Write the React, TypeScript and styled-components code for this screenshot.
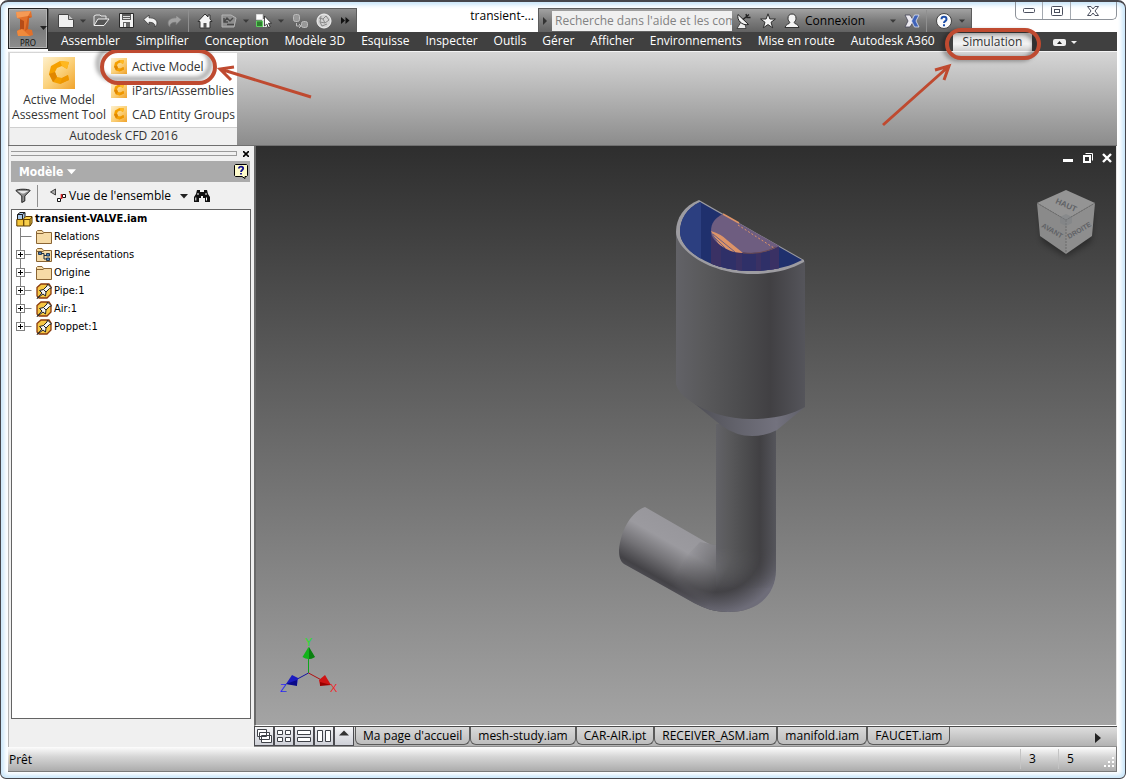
import React from "react";
import styled, { createGlobalStyle, css } from "styled-components";

const ui = `"Open Sans", "Noto Sans", sans-serif`;
const tahoma = `"DejaVu Sans Condensed", "DejaVu Sans", "Noto Sans", sans-serif`;
const markRed = "#bf4a30";

const GlobalStyle = createGlobalStyle`
  * { box-sizing: border-box; }
  body { margin: 0; background: #fff; font: 12px/15px ${ui}; color: #000; }
  button, input { font: inherit; color: inherit; border: 0; padding: 0; margin: 0; background: none; border-radius: 0; }
  ul { list-style: none; margin: 0; padding: 0; }
  svg { display: block; flex: none; }
`;

const Window = styled.div`
  display: flex;
  flex-direction: column;
  min-height: 100vh;
  padding: 0 8px 6px 7px;
  border: 1px solid #46464c;
  border-top-width: 2px;
  border-radius: 8px 8px 6px 6px;
  background: #fff;
  box-shadow: inset 0 0 4px 3px #c9e6fa;
`;

/* ---------- header ---------- */
const Header = styled.header`
  display: grid;
  grid-template-columns: 40px minmax(0, 1fr);
  grid-template-rows: 30px 19px;
`;

const AppButton = styled.button`
  grid-row: 1 / span 2;
  margin-top: 6px;
  height: 41px;
  border: 1px solid #222;
  background: linear-gradient(#a4a4a4, #7c7c7c 55%, #8d8d8d);
  box-shadow: inset 0 0 0 1px #b4b4b4;
  position: relative;
  z-index: 1;
`;

const TitleRow = styled.div`
  display: flex;
  align-items: flex-end;
`;

const barBackground = css`
  height: 24px;
  display: flex;
  flex: none;
  align-items: center;
  border: 1px solid #5c5c5c;
  border-bottom: 0;
  background: linear-gradient(#8e8e8e, #6c6c6c 50%, #5a5a5a);
`;

const QuickBar = styled.div`
  ${barBackground}
  padding-left: 5px;
  width: 309px;
`;

const InfoBar = styled.div`
  ${barBackground}
  width: 434px;
  background: linear-gradient(#a2a2a2, #7c7c7c 50%, #626262);
`;

const Tool = styled.button<{ $w: number }>`
  width: ${(p) => p.$w}px;
  height: 22px;
  display: flex;
  flex: none;
  align-items: center;
  justify-content: center;
`;

const Separator = styled.span`
  width: 1px;
  height: 22px;
  margin: 0 3px 0 2px;
  background: #8f8f8f;
`;

const DocTitle = styled.div`
  flex: 1;
  text-align: right;
  padding: 0 4px 4px 0;
  align-self: center;
  white-space: nowrap;
`;

const Search = styled.input`
  width: 180px;
  height: 20px;
  padding: 0 0 0 3px;
  background: #f0f0f0;
  &::placeholder { color: #828282; opacity: 1; }
`;

const Account = styled.button`
  display: flex;
  align-items: center;
  justify-content: space-between;
  width: 96px;
  padding: 0 4px 0 1px;
`;

const WindowControls = styled.div`
  display: flex;
  flex: none;
  align-self: flex-start;
  width: 102px;
  height: 18px;
  margin-left: 43px;
  border: 1px solid #8d9299;
  border-top: 0;
  border-radius: 0 0 5px 5px;
`;

const Control = styled.button<{ $wide?: boolean }>`
  flex: ${(p) => (p.$wide ? 46 : 27)};
  display: flex;
  align-items: center;
  justify-content: center;
  & + & { border-left: 1px solid #a4a9b0; }
`;

const TabBar = styled.nav`
  display: flex;
  align-items: stretch;
  padding-left: 5px;
  background: #404040;
  color: #fff;
`;

const TabHolder = styled.div`
  position: relative;
  display: flex;
`;

const Tab = styled.button<{ $active?: boolean }>`
  padding: 0 8px 2px;
  white-space: nowrap;
  ${(p) =>
    p.$active &&
    css`
      margin: 1px 0 0 10px;
      padding: 0 10px 2px;
      color: #333;
      background: linear-gradient(#d9d9d9, #f4f4f4 60%, #cfcfcf);
      border-radius: 2px 2px 0 0;
    `}
`;

/* ---------- ribbon ---------- */
const Ribbon = styled.section`
  height: 95px;
  display: flex;
  padding: 1px 0 0 1px;
  border-top: 1px solid #f4f4f4;
  background: linear-gradient(#d6d6d6, #8c8c8c);
  border-bottom: 1px solid #6f6f6f;
`;

const RibbonPanel = styled.div`
  width: 228px;
  display: flex;
  flex-direction: column;
  background: #fff;
  border-left: 1px solid #cfcfcf;
`;

const RibbonTools = styled.div`
  flex: 1;
  display: flex;
  color: #333;
`;

const BigTool = styled.button`
  width: 98px;
  display: flex;
  flex-direction: column;
  align-items: center;
  gap: 3px;
  padding-top: 4px;
  white-space: nowrap;
`;

const SmallTools = styled.ul`
  padding-top: 1px;
`;

const SmallToolItem = styled.li`
  position: relative;
  height: 24px;
`;

const SmallTool = styled.button`
  display: flex;
  align-items: center;
  gap: 5px;
  height: 24px;
  padding-left: 3px;
  white-space: nowrap;
`;

const RibbonTitle = styled.div`
  height: 18px;
  line-height: 16px;
  text-align: center;
  color: #333;
  background: #f0f0f0;
  border-top: 1px solid #cfcfcf;
`;

const Mark = styled.svg<{ $x: number; $y: number }>`
  position: absolute;
  left: ${(p) => p.$x}px;
  top: ${(p) => p.$y}px;
  z-index: 3;
  pointer-events: none;
`;

/* ---------- body ---------- */
const Body = styled.main`
  flex: 1;
  display: flex;
`;

const SidePanel = styled.aside`
  width: 246px;
  display: flex;
  flex-direction: column;
  padding: 0 3px 28px 2px;
  border-left: 1px solid #b4b4b4;
  background: #f0f0f0;
`;

const GripRow = styled.div`
  height: 15px;
  display: flex;
  align-items: center;
  gap: 4px;
`;

const Grip = styled.div`
  flex: 1;
  height: 5px;
  border: solid #9a9a9a;
  border-width: 1px 1px 1px 0;
`;

const PanelHeader = styled.div`
  height: 21px;
  display: flex;
  align-items: center;
  justify-content: space-between;
  padding: 0 2px 0 8px;
  margin-right: 1px;
  background: #ababab;
  color: #fff;
  font: bold 12px/16px ${tahoma};
`;

const PanelMenu = styled.button`
  display: flex;
  align-items: center;
  gap: 4px;
`;

const PanelTools = styled.div`
  height: 27px;
  display: flex;
  align-items: center;
`;

const ViewMenu = styled.button`
  display: flex;
  align-items: center;
  width: 138px;
  gap: 3px;
  margin: 0 5px 0 9px;
  white-space: nowrap;
`;

const Push = styled.span`
  flex: 1;
`;

const Tree = styled.ul`
  flex: 1;
  border: 1px solid #646464;
  background: #fff;
  font: 11px/18px ${tahoma};
`;

const TreeRow = styled.li<{ $root?: boolean }>`
  display: flex;
  align-items: center;
  height: 18px;
  gap: 2px;
  padding-left: 4px;
  font-weight: ${(p) => (p.$root ? "bold" : "normal")};
`;

const Stage = styled.section`
  flex: 1;
  min-width: 0;
  display: flex;
  flex-direction: column;
`;

const Viewport = styled.div`
  flex: 1;
  position: relative;
  border-left: 2px solid #6a6a6a;
  border-right: 1px solid #e6e6e6;
  border-bottom: 1px solid #fff;
  background: linear-gradient(#2e2e2e, #a4a4a4);
`;

const Model = styled.svg`
  position: absolute;
  left: calc(50% - 70px);
  top: 50px;
`;

const Triad = styled.svg`
  position: absolute;
  left: 20px;
  bottom: 30px;
`;

const Cube = styled.svg`
  position: absolute;
  right: 14px;
  top: 38px;
`;

const ChildControls = styled.div`
  position: absolute;
  right: 0;
  top: 1px;
  display: flex;
`;

const DocTabs = styled.div`
  height: 21px;
  display: flex;
  align-items: flex-start;
  border-top: 1px solid #4a4a4a;
  border-bottom: 1px solid #8f8f8f;
  background: linear-gradient(#dedede, #b2b2b2);
`;

const Arrange = styled.button`
  width: 20px;
  height: 19px;
  display: flex;
  align-items: center;
  justify-content: center;
  border: 1px solid #4b4b50;
  border-top: 0;
  background: linear-gradient(#f4f4f6, #cfd1d8);
`;

const DocList = styled.div`
  flex: 1;
  display: flex;
  padding-left: 1px;
`;

const DocTab = styled.button`
  height: 18px;
  padding: 0 7px;
  white-space: nowrap;
  border: 1px solid #5a5a5a;
  border-top: 0;
  border-radius: 0 0 6px 6px;
  background: linear-gradient(#d9d9d9, #bdbdbd);
`;

const StatusBar = styled.footer`
  height: 25px;
  display: flex;
  align-items: center;
  padding-left: 1px;
  background: linear-gradient(#fdfdfd, #d6d6d6 40%, #acacac);
  border-bottom: 1px solid #7a7a7a;
  border-right: 1px solid #7a7a7a;
`;

const StatusCell = styled.span`
  width: 38px;
  height: 20px;
  line-height: 20px;
  padding-left: 8px;
  border-left: 1px solid #c4c4c4;
`;

/* ---------- icons ---------- */
const Caret = ({ color = "#3a3a3a", s = 6 }: { color?: string; s?: number }) => (
  <svg width={s} height={s} viewBox="0 0 6 6"><path d="M0 1.5h6L3 4.8z" fill={color} /></svg>
);

const CfdIcon = ({ size }: { size: number }) => (
  <svg width={size} height={size} viewBox="0 0 32 32">
    <defs>
      <linearGradient id={`cfd${size}`} x1="0" y1="0" x2="1" y2="1">
        <stop offset="0" stopColor="#fef0cd" /><stop offset=".5" stopColor="#fbd27c" /><stop offset="1" stopColor="#f0a32c" />
      </linearGradient>
    </defs>
    <rect width="32" height="32" fill={`url(#cfd${size})`} />
    <path d="M26 5l-9-1-9 5-2 8 4 8 7 2 9-4-1-5-6 3-5-1-2-5 2-4 5-2 5 3z" fill="#f5a000" />
    <path d="M26 5l-9-1 2 5 5 3z" fill="#ffb820" /><path d="M6 17l6-2 2 5-4 5z" fill="#e08600" /><path d="M17 27l2-6 6-3 1 5z" fill="#ee9600" />
  </svg>
);

const InventorIcon = () => (
  <svg width="38" height="39" viewBox="0 0 38 39">
    <path d="M7 3l15-1 1 6-3 1-1 11 4 1 1 5-3 1H9l-1-5 3-2V10L8 9z" fill="#e2702a" />
    <path d="M7 3l15-1-3 5-11 2z" fill="#f59a55" /><path d="M11 10l4 2v8l-4 1z" fill="#b64c17" />
    <path d="M8 22l5-2 8 7H9z" fill="#f08a3c" /><path d="M19 7l4 1-3 1-1 11-3 2z" fill="#c85a1d" />
    <path d="M31 17h7l-3.5 4z" fill="#222" />
    <text x="11" y="37" fontSize="8" fontFamily="Noto Sans" fill="#111">PRO</text>
  </svg>
);

const NewIcon = () => (
  <svg width="16" height="14" viewBox="0 0 16 14"><path d="M.5.5h10l5 5v8H.5z" fill="#f0f0f0" stroke="#444" /><path d="M10.500.5v5h5" fill="#c4c4c4" stroke="#555" /></svg>
);
const OpenIcon = () => (
  <svg width="17" height="13" viewBox="0 0 17 13"><path d="M1 11V2l2-1h4l1 1h5v3" fill="#777" stroke="#e8e8e8" /><path d="M1 11.500L5 5h11l-5 6.500z" fill="#555" stroke="#eee" /></svg>
);
const SaveIcon = () => (
  <svg width="15" height="15" viewBox="0 0 15 15"><path d="M.5.500h14v14H.500z" fill="#f2f2f2" stroke="#2a2a2a" /><rect x="3" y="1" width="9" height="6" fill="#5a5a5a" /><path d="M4 3.500h7M4 5.500h7" stroke="#ddd" /><rect x="4" y="9" width="7" height="5" fill="#666" /><rect x="5" y="10" width="2" height="4" fill="#eee" /></svg>
);
const UndoIcon = ({ dim }: { dim?: boolean }) => (
  <svg width="15" height="14" viewBox="0 0 15 14">
    <path transform={dim ? "matrix(-1 0 0 1 15 0)" : undefined} d="M.7 5.500L6 1v2.800c5 0 8 2 8 5.200 0 2-1 3-2 4 .4-3-1.500-4.600-6-4.700v2.500z" fill={dim ? "#a2a2a2" : "#f2f2f2"} stroke={dim ? "#777" : "#3a3a3a"} strokeWidth=".8" />
  </svg>
);
const HomeIcon = () => (
  <svg width="16" height="16" viewBox="0 0 16 16"><path d="M1 8.500L8 1l3 3V2h2v4l2 2.500h-2V15H3V8.500z" fill="#f4f4f4" stroke="#333" /><path d="M6.500 15v-5h3v5" fill="#555" /></svg>
);
const SwapIcon = () => (
  <svg width="16" height="14" viewBox="0 0 16 14" fill="none" stroke="#b4b4b4"><path d="M1 1h9l5 3-2 9H1z" fill="#8e8e8e" /><path d="M3 8l3-4 3 3 3-3M3 4v4h4M13 10.500H6" stroke="#484848" strokeWidth="1.400" /></svg>
);
const SelectIcon = () => (
  <svg width="17" height="16" viewBox="0 0 17 16"><path d="M1.500 1.500h6v5h-6z" fill="#fff" stroke="#ddd" /><path d="M7.500 6.500h4v7h-4z" fill="#dcdcdc" stroke="#eee" /><path d="M1.500 8h6v5.500h-6z" fill="#2f7f2f" stroke="#5fd05f" /><path d="M9.500 3v10l2.300-2 1.700 3.600 1.700-.8-1.700-3.500h3z" fill="#fff" stroke="#222" strokeWidth=".8" /></svg>
);
const LinkIcon = () => (
  <svg width="16" height="16" viewBox="0 0 16 16" fill="#989898" stroke="#bcbcbc"><rect x="1.500" y="1.500" width="6" height="7" rx="2" /><rect x="9.500" y="8.500" width="6" height="6" rx="2" /><path d="M4.500 10v3h4M7 11l2 2-2 2" fill="none" /></svg>
);
const SphereIcon = () => (
  <svg width="16" height="16" viewBox="0 0 16 16"><circle cx="8" cy="8" r="7" fill="#d2d2d2" stroke="#f5f5f5" /><path d="M3 5l4 1 3-3 3 4-4 3-5-1 2 4 5-2M7 6l2 4M5 3l-1 6" stroke="#888" fill="none" /></svg>
);
const MoreIcon = () => (
  <svg width="9" height="7" viewBox="0 0 9 7"><path d="M0 0l4 3.500L0 7zM4.500 0l4 3.500-4 3.500z" fill="#111" /></svg>
);
const DishIcon = () => (
  <svg width="16" height="16" viewBox="0 0 16 16"><path d="M5 9l-4 6.500h9L9 11z" fill="#eee" stroke="#333" strokeWidth=".8" /><path d="M2 1.500C.5 7 6 13 12.500 11.500z" fill="#f4f4f4" stroke="#222" /><path d="M7 6.500l6-5M10 1l1 3.500h3.500" stroke="#222" fill="none" strokeWidth="1.400" /></svg>
);
const StarIcon = () => (
  <svg width="16" height="16" viewBox="0 0 16 16"><path d="M8 .8l1.900 5.200h5.500l-4.400 3.300 1.700 5.500L8 11.600l-4.700 3.200L5 9.300.6 6h5.500z" fill="#f4f4f4" stroke="#2c2c2c" /></svg>
);
const UserIcon = () => (
  <svg width="16" height="16" viewBox="0 0 16 16"><path d="M8 1c2.500 0 4 1.600 4 4.200 0 2-1 3.600-2 4.300.3 1.500 4.500 1.500 5 5H1c.5-3.500 4.700-3.500 5-5-1-.7-2-2.300-2-4.300C4 2.600 5.500 1 8 1z" fill="#f4f4f4" stroke="#333" /></svg>
);
const ExchangeIcon = () => (
  <svg width="16" height="14" viewBox="0 0 16 14"><path d="M1 1h5L8.500 5v4L6 13H1l3-6z" fill="#eceaf0" stroke="#445" strokeWidth=".8" /><path d="M15 1h-4.500L7.500 7l3 6H15l-3-6z" fill="#3f62b8" stroke="#dfe5f5" strokeWidth=".8" /></svg>
);
const HelpIcon = () => (
  <svg width="16" height="16" viewBox="0 0 16 16"><circle cx="8" cy="8" r="7.500" fill="#fafafa" stroke="#444" /><path d="M5.500 6.200c0-3.200 5-3.200 5 0 0 2-2.500 1.800-2.500 3.800M8 11.200v2" stroke="#1f4fa8" strokeWidth="2" fill="none" /></svg>
);
const FilterIcon = () => (
  <svg width="16" height="15" viewBox="0 0 16 15"><path d="M.8 2.500C3 .8 13 .8 15.200 2.500L9.800 8v5l-3 1.500V8z" fill="#8c8c8c" stroke="#222" /><path d="M2.500 3h11L9 5.500H7z" fill="#e6e6e6" /></svg>
);
const AssemblyViewIcon = () => (
  <svg width="16" height="16" viewBox="0 0 16 16"><path d="M.5 4l5-3v6z" fill="#aaa" stroke="#222" strokeWidth=".8" /><path d="M7.500 10.500h3v3h-3zM12.500 6.500h3v3h-3z" fill="#fff" stroke="#111" /><path d="M11.500 6v5" stroke="#d22" strokeWidth="1.600" /></svg>
);
const BinocularsIcon = () => (
  <svg width="16" height="14" viewBox="0 0 16 14"><path d="M3 1h3v2h4V1h3l1 4 2 3v5h-5V9H9V7H7v2H5v4H0V8l2-3z" fill="#111" /><path d="M4 4v2M1.800 8.500v3M12 4v2M12.500 8.500v3" stroke="#fff" /></svg>
);
const NoteHelpIcon = () => (
  <svg width="14" height="15" viewBox="0 0 14 15"><path d="M1.500.5h11l1 1v10l-1 1H11v2l-3-2H1.500l-1-1v-10z" fill="#fffccc" stroke="#000" /><path d="M4.800 4.500c0-2.500 4.400-2.500 4.400 0C9.200 6 7 6 7 8M7 9v1.600" stroke="#11118c" strokeWidth="1.800" fill="none" /></svg>
);
const RootIcon = () => (
  <svg width="17" height="17" viewBox="0 0 17 17"><path d="M1.500 3.500l2.500-2h5v7h-7.500z" fill="#a9c8ea" stroke="#1a1a1a" /><path d="M1.500 3.500h5v5M6.500 3.500l2.500-2" stroke="#1a1a1a" fill="none" /><path d="M.8 8.500h7v6.500h-7z" fill="#f5c63a" stroke="#5b3a00" /><path d="M7.800 7.500l2-2h6.200v6.500l-2 3h-6.200z" fill="#f8cf4c" stroke="#5b3a00" /><path d="M8 8.500h6v6M14 8.500l2-2.500" stroke="#5b3a00" fill="none" /></svg>
);
const FolderIcon = ({ rep }: { rep?: boolean }) => (
  <svg width="16" height="16" viewBox="0 0 16 16">
    <path d="M.5 14.500v-12l1-1H6l1.500 2h8v11z" fill="#f6dba6" stroke="#8a6534" /><path d="M.5 4.500h7" stroke="#8a6534" />
    {rep && (<><path d="M4 6.500h4v5.500h3M8 8.500h3" stroke="#1d2f45" fill="none" /><path d="M2.500 5h3v2.500h-3zM10.500 6.500h3v2.500h-3zM10.500 11h3v2.500h-3z" fill="#4f86c0" stroke="#1d2f45" strokeWidth=".9" /></>)}
  </svg>
);
const PartIcon = () => (
  <svg width="16" height="16" viewBox="0 0 16 16"><path d="M1 4.500l4-3.500h8l2 3v7l-4 4H3l-2-2z" fill="#f6c744" stroke="#8b3a0e" strokeWidth="1.300" /><path d="M1 15.500l5-5.500-2.500-2.500 4-1L11 3l.5-2L15.500 5l-2 .5L10 9l-.5 4L7 11z" fill="#f4f4f4" stroke="#222" /><path d="M7.500 6.500L10 9" stroke="#222" /></svg>
);
const Connector = ({ kind }: { kind: "leaf" | "node" | "last" }) => (
  <svg width="18" height="18" viewBox="0 0 18 18">
    <path d={`M4.500 0v${kind === "last" ? 9 : 18}M4.500 8.500h11`} stroke="#808080" fill="none" />
    {kind !== "leaf" && (<><rect x=".5" y="4.500" width="8" height="8" fill="#fff" stroke="#808080" /><path d="M2 8.500h5M4.500 6v5" stroke="#000" /></>)}
  </svg>
);

const arrangeShapes = [
  "M1.500 1.500h9v7h-9zM3.500 4.500h10v7h-10zM5.500 7.500h10v7h-10z",
  "M1.500 2.500h5v4h-5zM9.500 2.500h5v4h-5zM1.500 9.500h5v4h-5zM9.500 9.500h5v4h-5z",
  "M1.500 2.500h13v4h-13zM1.500 9.500h13v4h-13z",
  "M1.500 2.500h5v11h-5zM9.500 2.500h5v11h-5z",
];

const SimulationMark = () => (
  <Mark $x={-62} $y={-6} width="170" height="108" viewBox="880 26 170 108" fill="none">
    <defs><filter id="soft2" x="-20%" y="-40%" width="140%" height="180%"><feGaussianBlur stdDeviation="2" /></filter></defs>
    <rect x="943" y="32" width="91" height="27" rx="14" stroke="#000" strokeOpacity=".4" strokeWidth="4" filter="url(#soft2)" />
    <rect x="946" y="30" width="92" height="28" rx="14" stroke={markRed} strokeWidth="4" />
    <path d="M882 125L947 67M934 70l14-4-5 14" stroke={markRed} strokeWidth="3" />
  </Mark>
);

const ActiveModelMark = () => (
  <Mark $x={-18} $y={-4} width="224" height="56" viewBox="90 50 224 56" fill="none">
    <defs><filter id="soft1" x="-20%" y="-40%" width="140%" height="180%"><feGaussianBlur stdDeviation="2" /></filter></defs>
    <rect x="98" y="48" width="112" height="31" rx="15" stroke="#000" strokeOpacity=".4" strokeWidth="4" filter="url(#soft1)" />
    <rect x="102" y="51" width="113" height="32" rx="16" stroke={markRed} strokeWidth="4" />
    <path d="M311 97L220 69M231 80l-11-11 14-2" stroke={markRed} strokeWidth="3" />
  </Mark>
);

const tabs = ["Assembler", "Simplifier", "Conception", "Modèle 3D", "Esquisse", "Inspecter", "Outils", "Gérer", "Afficher", "Environnements", "Mise en route", "Autodesk A360"];
const docs = ["Ma page d'accueil", "mesh-study.iam", "CAR-AIR.ipt", "RECEIVER_ASM.iam", "manifold.iam", "FAUCET.iam"];
const smallTools = ["Active Model", "iParts/iAssemblies", "CAD Entity Groups"];
const nodes: { label: string; kind: "leaf" | "node" | "last"; icon: React.ReactNode }[] = [
  { label: "Relations", kind: "leaf", icon: <FolderIcon /> },
  { label: "Représentations", kind: "node", icon: <FolderIcon rep /> },
  { label: "Origine", kind: "node", icon: <FolderIcon /> },
  { label: "Pipe:1", kind: "node", icon: <PartIcon /> },
  { label: "Air:1", kind: "node", icon: <PartIcon /> },
  { label: "Poppet:1", kind: "last", icon: <PartIcon /> },
];

const ValveModel = () => (
  <Model width="192" height="420" viewBox="616 196 192 420" role="img" aria-label="Valve">
    <defs>
      <linearGradient id="body"><stop offset="0" stopColor="#626267" /><stop offset=".2" stopColor="#5a5a5c" /><stop offset=".5" stopColor="#4c4c4e" /><stop offset=".73" stopColor="#414043" /><stop offset="1" stopColor="#55555b" /></linearGradient>
      <linearGradient id="cone"><stop offset="0" stopColor="#4d4d53" /><stop offset=".4" stopColor="#62626b" /><stop offset=".75" stopColor="#73727e" /><stop offset="1" stopColor="#5f5f68" /></linearGradient>
      <linearGradient id="side" gradientUnits="userSpaceOnUse" x1="676" y1="525" x2="646" y2="578"><stop offset="0" stopColor="#98979c" /><stop offset=".3" stopColor="#9b9a9f" /><stop offset=".6" stopColor="#737276" /><stop offset=".9" stopColor="#434246" /><stop offset="1" stopColor="#4e4d53" /></linearGradient>
      <radialGradient id="bend" gradientUnits="userSpaceOnUse" cx="716" cy="546" r="68"><stop offset="0" stopColor="#68676b" /><stop offset=".35" stopColor="#5a5a5d" /><stop offset=".68" stopColor="#434246" /><stop offset="1" stopColor="#6e6d79" /></radialGradient>
      <linearGradient id="bendFade" gradientUnits="userSpaceOnUse" x1="684" y1="560" x2="722" y2="580"><stop offset="0" stopColor="#000" /><stop offset="1" stopColor="#fff" /></linearGradient>
      <linearGradient id="pipeFade" gradientUnits="userSpaceOnUse" x1="0" y1="548" x2="0" y2="590"><stop offset="0" stopColor="#fff" /><stop offset="1" stopColor="#000" /></linearGradient>
      <mask id="bendMask"><rect x="616" y="400" width="192" height="220" fill="url(#bendFade)" /></mask>
      <mask id="pipeMask"><rect x="616" y="400" width="192" height="220" fill="url(#pipeFade)" /></mask>
      <clipPath id="cup"><path d="M700 202C687 208 680 219 680 232c0 18 30 39 72 39 20 0 37-4 50-11z" /></clipPath>
    </defs>
    <path d="M645 507L704 541q6 4 12 4h60v25c0 25-18 42-48 42-14 0-24-4-34-9L624 564c-4-3-5-8-5-14 2-20 12-38 26-43z" fill="url(#side)" />
    <path d="M716 545h60v25c0 25-18 42-48 42-14 0-24-4-34-9L660 584 700 542z" fill="url(#bend)" mask="url(#bendMask)" />
    <path d="M716 424h60v146q0 9-4 18h-56z" fill="url(#body)" mask="url(#pipeMask)" />
    <path d="M690 400L722 426q14 10 30 10 14 0 25-6L805 407 750 410z" fill="url(#cone)" />
    <path d="M676 232v152q2 9 14 17c16 11 38 18 61 18 22 0 40-4 54-12V261z" fill="url(#body)" />
    <path d="M699 200C684 206 676 218 676 232c0 17 32 42 76 42 20 0 38-4 52-12v-2z" fill="#9d9ca1" />
    <g clipPath="url(#cup)">
      <rect x="676" y="196" width="130" height="80" fill="#1f306d" />
      <rect x="676" y="196" width="25" height="80" fill="#2c3f80" />
      <path d="M711 230h68v46h-68z" fill="#2f3068" />
      <path d="M711 230h10v46h-10zM736 246h6v30h-6zM756 246h5v30h-5zM770 240h9v36h-9z" fill="#3a3164" />
    </g>
    <path d="M723 214L779 246c-8 5-17 7-28 7-22 0-40-10-40-22 0-8 4-13 12-17z" fill="#6e5d80" />
    <path d="M711 231q10 3 16 9l16 13c-10 0-19-4-25-10z" fill="#dd9468" />
    <path d="M712 235l14 14M713 234l22 18" stroke="#6e5d80" />
    <path d="M723 214l16 9" stroke="#dd9468" strokeWidth="1.500" />
    <path d="M738 225l36 23" stroke="#dd9468" strokeDasharray="2 2" />
    <path d="M743 253q18 2 33-6" stroke="#6b4a50" fill="none" />
  </Model>
);

const ViewCube = () => (
  <Cube width="72" height="76" viewBox="1030 184 72 76" fontFamily="Liberation Sans" fontWeight="bold" fill="#606266">
    <defs><filter id="cubeShadow" x="-30%" y="-30%" width="160%" height="160%"><feGaussianBlur stdDeviation="3" /></filter></defs>
    <path d="M1040 212l26 14 27-14-2 30-25 15-24-15z" fill="#000" fillOpacity=".35" filter="url(#cubeShadow)" />
    <path d="M1066 190l29 13-29 17-29-17z" fill="#949494" />
    <path d="M1037 203l29 17v34l-26-18z" fill="#8a8a8a" />
    <path d="M1095 203l-29 17v34l26-18z" fill="#8e8e8e" />
    <path d="M1037 203l29 17 29-17M1066 220v34" stroke="#6b6b6b" fill="none" strokeDasharray="2 1" />
    <path d="M1066 214l6 3v6l-6 3-6-3v-6z" fill="#7c8084" fillOpacity=".5" />
    <text transform="translate(1055 203) rotate(24)" fontSize="8">HAUT</text>
    <text transform="translate(1041 227) rotate(30)" fontSize="7">AVANT</text>
    <text transform="translate(1069 239) rotate(-30)" fontSize="7">DROITE</text>
  </Cube>
);

const AxisTriad = () => (
  <Triad width="64" height="58" viewBox="276 636 64 58" fontFamily="Liberation Sans" fontSize="11">
    <path d="M308.500 672v-18" stroke="#0fa51c" />
    <path d="M308.500 672l-13 7" stroke="#1414a0" /><path d="M308.500 672l13 7" stroke="#b01010" />
    <path d="M308.500 646l6 10q-6 4-12 0z" fill="#12b31a" /><path d="M309 646l6 10q-3 2-6 2z" fill="#0a8010" />
    <path d="M286 683l6-9 6 3-1 7z" fill="#1b1bc0" /><path d="M286 683l11-4v6z" fill="#0a0a8a" />
    <path d="M331 684l-6-10-6 5 1 5z" fill="#d01414" /><path d="M331 684l-11-3v4z" fill="#900" />
    <text x="305" y="645" fill="#25e02e">Y</text><text x="280" y="691" fill="#2b2bf0">Z</text><text x="330" y="691" fill="#f02b2b">X</text>
  </Triad>
);

export default function App() {
  return (
    <Window>
      <GlobalStyle />
      <Header>
        <AppButton aria-label="Inventor"><InventorIcon /></AppButton>
        <TitleRow>
          <QuickBar>
            <Tool $w={24} aria-label="Nouveau"><NewIcon /></Tool>
            <Tool $w={10} aria-label="Options"><Caret /></Tool>
            <Tool $w={26} aria-label="Ouvrir"><OpenIcon /></Tool>
            <Tool $w={24} aria-label="Enregistrer"><SaveIcon /></Tool>
            <Tool $w={24} aria-label="Annuler"><UndoIcon /></Tool>
            <Tool $w={24} aria-label="Rétablir"><UndoIcon dim /></Tool>
            <Separator />
            <Tool $w={26} aria-label="Accueil"><HomeIcon /></Tool>
            <Tool $w={22} aria-label="Mettre à jour"><SwapIcon /></Tool>
            <Tool $w={12} aria-label="Options"><Caret /></Tool>
            <Tool $w={22} aria-label="Sélectionner"><SelectIcon /></Tool>
            <Tool $w={14} aria-label="Options"><Caret /></Tool>
            <Tool $w={24} aria-label="Lier"><LinkIcon /></Tool>
            <Tool $w={24} aria-label="Apparence"><SphereIcon /></Tool>
            <Tool $w={18} aria-label="Plus"><MoreIcon /></Tool>
          </QuickBar>
          <DocTitle>transient-...</DocTitle>
          <InfoBar>
            <Tool $w={13} aria-label="Réduire"><svg width="5" height="8" viewBox="0 0 5 8"><path d="M0 0l4 4-4 4z" fill="#333" /></svg></Tool>
            <Search aria-label="Recherche" placeholder="Recherche dans l'aide et les com" />
            <Tool $w={24} aria-label="Communication"><DishIcon /></Tool>
            <Tool $w={24} aria-label="Favoris"><StarIcon /></Tool>
            <Tool $w={24} aria-label="Profil"><UserIcon /></Tool>
            <Account>Connexion<Caret /></Account>
            <Tool $w={24} aria-label="Exchange"><ExchangeIcon /></Tool>
            <Separator />
            <Tool $w={28} aria-label="Aide"><HelpIcon /></Tool>
            <Tool $w={8} aria-label="Options"><Caret /></Tool>
          </InfoBar>
          <WindowControls>
            <Control aria-label="Réduire"><svg width="12" height="5" viewBox="0 0 12 5"><rect x=".5" y=".5" width="11" height="4" rx="1" fill="#fff" stroke="#4a4f5e" /></svg></Control>
            <Control aria-label="Agrandir"><svg width="12" height="10" viewBox="0 0 12 10" fill="#fff" stroke="#4a4f5e"><rect x=".5" y=".5" width="11" height="9" rx="1" /><rect x="3.500" y="3.500" width="5" height="3" /></svg></Control>
            <Control $wide aria-label="Fermer"><svg width="12" height="10" viewBox="0 0 12 10"><path d="M.5.500h3.500l2 2.500 2-2.500h3.500L8 5l3.500 4.500H8L6 7 4 9.500H.500L4 5z" fill="#fff" stroke="#4a4f5e" /></svg></Control>
          </WindowControls>
        </TitleRow>
        <TabBar>
          {tabs.map((t) => <Tab key={t}>{t}</Tab>)}
          <TabHolder><Tab $active>Simulation</Tab><SimulationMark /></TabHolder>
          <Tool $w={66} aria-label="Affichage du ruban">
            <svg width="24" height="8" viewBox="0 0 24 8"><rect width="13" height="7" rx="2" fill="#eee" /><path d="M4 5l2.500-3L9 5z" fill="#222" /><path d="M18 2h6l-3 3z" fill="#eee" /></svg>
          </Tool>
        </TabBar>
      </Header>
      <Ribbon>
        <RibbonPanel>
          <RibbonTools>
            <BigTool><CfdIcon size={32} /><span>Active Model<br />Assessment Tool</span></BigTool>
            <SmallTools>
              {smallTools.map((t, i) => (
                <SmallToolItem key={t}><SmallTool><CfdIcon size={16} />{t}</SmallTool>{i === 0 && <ActiveModelMark />}</SmallToolItem>
              ))}
            </SmallTools>
          </RibbonTools>
          <RibbonTitle>Autodesk CFD 2016</RibbonTitle>
        </RibbonPanel>
      </Ribbon>
      <Body>
        <SidePanel>
          <GripRow>
            <Grip />
            <Tool $w={10} aria-label="Fermer"><svg width="6" height="6" viewBox="0 0 6 6"><path d="M0 0l6 6M6 0L0 6" stroke="#000" strokeWidth="1.600" /></svg></Tool>
          </GripRow>
          <PanelHeader>
            <PanelMenu>Modèle <Caret color="#fff" s={9} /></PanelMenu>
            <Tool $w={14} aria-label="Aide"><NoteHelpIcon /></Tool>
          </PanelHeader>
          <PanelTools>
            <Tool $w={24} aria-label="Filtre"><FilterIcon /></Tool>
            <Separator />
            <ViewMenu><AssemblyViewIcon />Vue de l'ensemble<Push /><Caret color="#222" s={8} /></ViewMenu>
            <Tool $w={18} aria-label="Rechercher"><BinocularsIcon /></Tool>
          </PanelTools>
          <Tree>
            <TreeRow $root><RootIcon /><span>transient-VALVE.iam</span></TreeRow>
            {nodes.map((n) => (
              <TreeRow key={n.label}><Connector kind={n.kind} />{n.icon}<span>{n.label}</span></TreeRow>
            ))}
          </Tree>
        </SidePanel>
        <Stage>
          <Viewport>
            <ValveModel />
            <AxisTriad />
            <ViewCube />
            <ChildControls>
              <Tool $w={20} aria-label="Réduire"><svg width="12" height="12" viewBox="0 0 12 12"><path d="M1 8.500h10" stroke="#fff" strokeWidth="3" /></svg></Tool>
              <Tool $w={20} aria-label="Restaurer"><svg width="12" height="12" viewBox="0 0 12 12" fill="none" stroke="#fff"><path d="M3.500 1.500h7v7" /><rect x="2" y="4" width="6" height="6" strokeWidth="2" /></svg></Tool>
              <Tool $w={18} aria-label="Fermer"><svg width="12" height="12" viewBox="0 0 12 12"><path d="M2 2l8 8M10 2l-8 8" stroke="#fff" strokeWidth="2.400" /></svg></Tool>
            </ChildControls>
          </Viewport>
          <DocTabs>
            {arrangeShapes.map((d) => (
              <Arrange key={d} aria-label="Disposition"><svg width="16" height="16" viewBox="0 0 16 16"><path d={d} fill="#fff" stroke="#3f4248" /></svg></Arrange>
            ))}
            <Arrange aria-label="Documents"><svg width="10" height="14" viewBox="0 0 10 14"><path d="M0 6.500L5 1.500l5 5z" fill="#333" /></svg></Arrange>
            <DocList>
              {docs.map((d) => <DocTab key={d}>{d}</DocTab>)}
            </DocList>
            <Tool $w={38} aria-label="Suivant"><svg width="6" height="10" viewBox="0 0 6 10"><path d="M0 0l6 5-6 5z" fill="#222" /></svg></Tool>
          </DocTabs>
        </Stage>
      </Body>
      <StatusBar>
        <span>Prêt</span><Push />
        <StatusCell>3</StatusCell><StatusCell>5</StatusCell>
        <svg width="20" height="22" viewBox="0 0 20 22"><path d="M16 10h2M12 14h2M16 14h2M8 18h2M12 18h2M16 18h2" stroke="#fff" strokeWidth="2" /></svg>
      </StatusBar>
    </Window>
  );
}
